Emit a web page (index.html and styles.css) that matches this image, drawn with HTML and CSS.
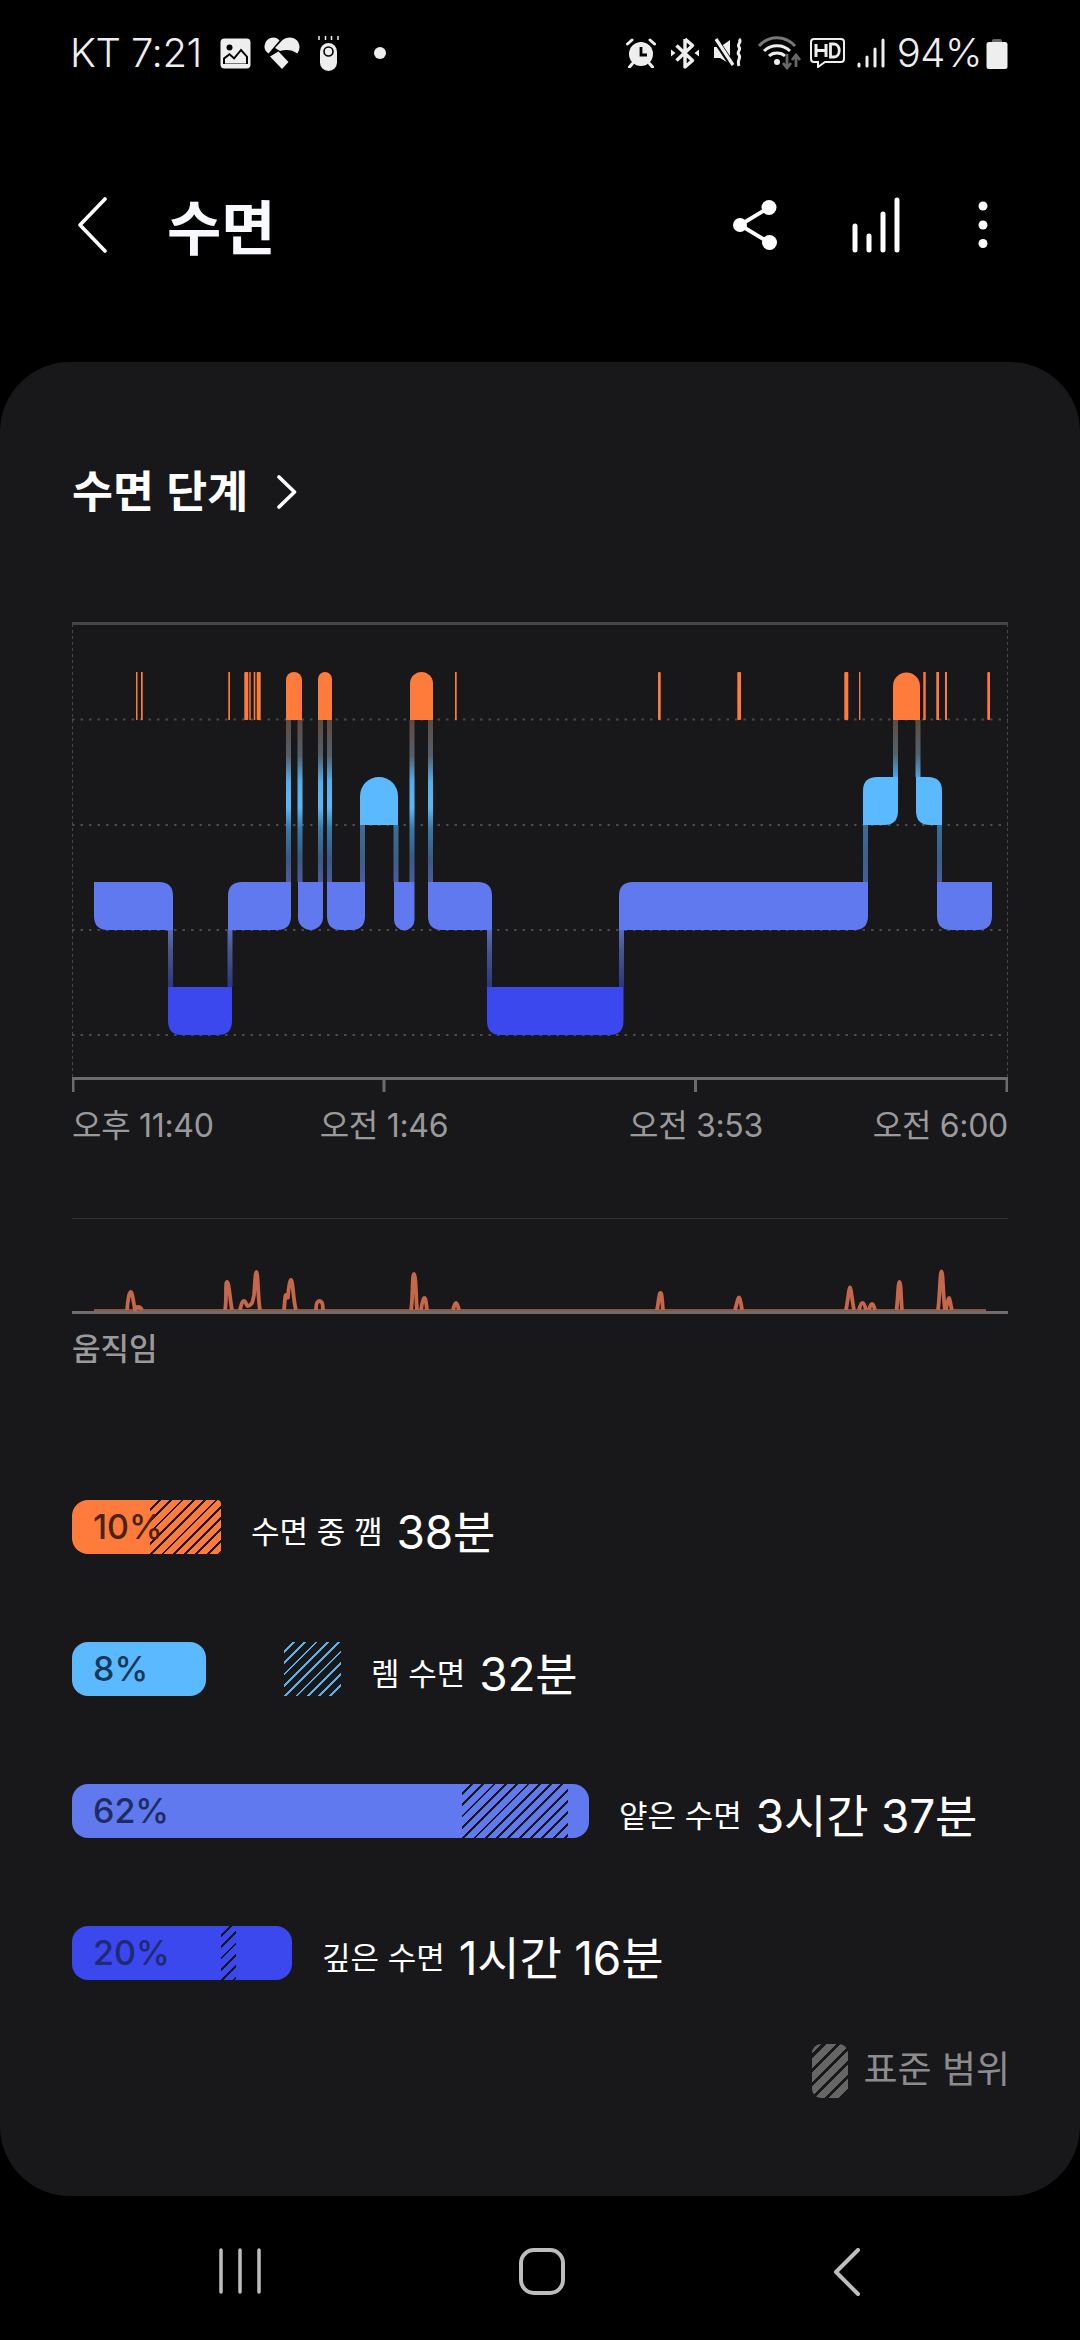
FILE: index.html
```html
<!DOCTYPE html>
<html lang="ko">
<head>
<meta charset="utf-8">
<title>수면</title>
<link rel="stylesheet" href="styles.css">
</head>
<body>
<div class="page">
  <header class="status">
    <div class="status-left">
      <span class="status-text">KT 7:21</span>
      <svg class="ic-image" width="31" height="31" viewBox="0 0 31 31"><rect x="0.5" y="0.5" width="30" height="30" rx="4" fill="#eee"/><circle cx="9.5" cy="9.5" r="3" fill="#000"/><path d="M3 26V20L9.500 15l4.500 4L21 10.500 28 18.500V26Z" fill="#000"/><path d="M5 25.500V21L9.500 17.500l4.700 4.200L21 13.500 26 19V25.500Z" fill="#eee"/></svg>
      <svg class="ic-heart" width="36" height="32" viewBox="0 0 36 32"><path d="M.5 10C.5 4.500 4.500.5 9.500.5 12 .5 14 1.500 15.500 3.500L4.500 16.500C1.800 14.500.5 12.500.5 10Z" fill="#eee"/><path d="M18 3.500C20 1.500 23 .5 26 .5c5.500 0 9.500 4.300 9.500 9.500 0 2.500-.8 4.500-2.300 6.500-5-3.800-11-4.200-17.200-2.500L11 11Z" fill="#eee"/><path d="M6 19.500 14.500 14.500 24.500 25 18 32Z" fill="#eee"/></svg>
      <svg class="ic-band" width="21" height="36" viewBox="0 0 21 36"><g stroke="#eee" stroke-width="1.500"><path d="M1 1v4M7.500 1v4M13.500 1v4M20 1v4"/></g><rect x="2" y="8" width="17" height="28" rx="8.500" fill="#eee"/><circle cx="10.500" cy="16.500" r="4.500" fill="#eee" stroke="#000" stroke-width="1.600"/></svg>
      <span class="status-dot"></span>
    </div>
    <div class="status-right">
      <svg width="30" height="30" viewBox="0 0 30 30"><circle cx="15" cy="16" r="12" fill="#eee"/><path d="M15 9V17H21" fill="none" stroke="#000" stroke-width="2.800"/><path d="M1.500 6 6 2M28.500 6 24 2M6.500 25.500 3.500 29M23.500 25.500l3 3.500" stroke="#eee" stroke-width="3" stroke-linecap="round"/></svg>
      <svg class="m-bt" width="28" height="32" viewBox="0 0 28 32"><path d="M14 2V30L21.500 23.500 5.500 8.500M14 2l7.500 6.500L5.500 23.500" fill="none" stroke="#eee" stroke-width="3.400" stroke-linejoin="round"/><path d="M0 12.500v7l4.500-3.500ZM28 12.500v7l-4.500-3.500Z" fill="#eee"/></svg>
      <svg class="m-mute" width="30" height="30" viewBox="0 0 30 30"><path d="M0 9h6L16 2V26L6 20H0Z" fill="#eee"/><path d="M1 1 19 28" stroke="#000" stroke-width="6"/><path d="M2 1 19 27" stroke="#eee" stroke-width="3.200"/><path d="M25 1c3.500 3-2.500 5 0 8 2.500 3-3 5 0 8 2.500 3-2.500 5 0 11" fill="none" stroke="#eee" stroke-width="3"/></svg>
      <svg class="m-wifi" width="44" height="34" viewBox="0 0 44 34"><path d="M1 10C11-1 27-1 37 10" fill="none" stroke="#777" stroke-width="3"/><path d="M6 15c7-7 19-7 26 0" fill="none" stroke="#eee" stroke-width="3"/><path d="M11 20c4-4 12-4 16 0" fill="none" stroke="#eee" stroke-width="3"/><circle cx="19" cy="26" r="3" fill="#eee"/><path d="M29 18V31M25 27l4 5 4-5" fill="none" stroke="#666" stroke-width="2.800"/><path d="M38 31V20M34 24l4-5 4 5" fill="none" stroke="#666" stroke-width="2.800"/></svg>
      <svg class="m-hd" width="35" height="30" viewBox="0 0 35 30"><path d="M4 1H31a3 3 0 0 1 3 3V21a3 3 0 0 1-3 3H15L8 29V24H4a3 3 0 0 1-3-3V4a3 3 0 0 1 3-3Z" fill="none" stroke="#eee" stroke-width="2"/><path d="M6 6V19M16 6V19M6 12.500H16" fill="none" stroke="#eee" stroke-width="3"/><path d="M20.500 6V19h3.500c7 0 7-13 0-13Z" fill="none" stroke="#eee" stroke-width="2.800"/></svg>
      <svg class="m-signal" width="28" height="30" viewBox="0 0 28 30"><g stroke="#eee" stroke-width="3" stroke-linecap="round"><path d="M2 26V28M10 19V28M18 11V28M26 2V28"/></g></svg>
      <span class="status-text status-pct">94%</span>
      <svg class="m-batt" width="22" height="31" viewBox="0 0 22 31"><path d="M6 3a2 2 0 0 1 2-2H14a2 2 0 0 1 2 2V4H6Z" fill="#666"/><rect x="0.500" y="4" width="21" height="27" rx="2.500" fill="#eee"/></svg>
    </div>
  </header>

  <nav class="appbar">
    <svg class="app-back" width="30" height="56" viewBox="0 0 30 56"><path d="M28 2 3 28 28 54" fill="none" stroke="#fff" stroke-width="3.600" stroke-linecap="round" stroke-linejoin="round"/></svg>
    <h1 class="app-title">수면</h1>
    <div class="app-actions">
      <svg class="app-share" width="44" height="50" viewBox="0 0 44 50"><path d="M36 7.500 7 25l29 17.500" fill="none" stroke="#fff" stroke-width="4"/><circle cx="36" cy="7.500" r="7.500" fill="#fff"/><circle cx="7" cy="25" r="7" fill="#fff"/><circle cx="36.500" cy="42.500" r="7.500" fill="#fff"/></svg>
      <svg class="app-bars" width="48" height="56" viewBox="0 0 48 56"><g stroke="#fff" stroke-width="5" stroke-linecap="round"><path d="M3 29V53M17 39V53M31 17V53M45 3V53"/></g></svg>
      <svg class="app-more" width="10" height="48" viewBox="0 0 10 48"><circle cx="5" cy="5" r="4.500" fill="#fff"/><circle cx="5" cy="24" r="4.500" fill="#fff"/><circle cx="5" cy="42.500" r="4.500" fill="#fff"/></svg>
    </div>
  </nav>

  <main class="card">
    <div class="card-title">
      <h2 class="card-heading">수면 단계</h2>
      <svg width="20" height="34" viewBox="0 0 20 34"><path d="M2 2 17.500 17 2 32" fill="none" stroke="#fff" stroke-width="3.600" stroke-linecap="round" stroke-linejoin="round"/></svg>
    </div>

    <svg class="stage-chart" width="936" height="476" viewBox="72 622 936 476">
      <defs>
        <linearGradient id="wakeLight" x1="0" y1="0" x2="0" y2="1">
          <stop offset="0" stop-color="#604a42"/><stop offset=".22" stop-color="#525f6c"/><stop offset=".38" stop-color="#55aeea"/><stop offset=".54" stop-color="#5bb8f8"/><stop offset=".67" stop-color="#387aa8"/><stop offset=".85" stop-color="#3a5a88"/><stop offset="1" stop-color="#4a5c9c"/>
        </linearGradient>
        <linearGradient id="remLight" x1="0" y1="0" x2="0" y2="1">
          <stop offset="0" stop-color="#3a6e96"/><stop offset=".6" stop-color="#3b5f8c"/><stop offset="1" stop-color="#4a5ca0"/>
        </linearGradient>
        <linearGradient id="lightDeep" x1="0" y1="0" x2="0" y2="1">
          <stop offset="0" stop-color="#5a6cbc"/><stop offset=".4" stop-color="#46548c"/><stop offset="1" stop-color="#2c3880"/>
        </linearGradient>
        <linearGradient id="wakeRem" x1="0" y1="0" x2="0" y2="1">
          <stop offset="0" stop-color="#604a42"/><stop offset=".6" stop-color="#52626e"/><stop offset="1" stop-color="#4aa4e4"/>
        </linearGradient>
      </defs>
      <g class="grid-dots">
        <path d="M72 719.500H1008M72 825H1008M72 930H1008M72 1035H1008"/>
      </g>
      <path class="grid-side" d="M72.500 624V1078M1007.500 624V1078"/>
      <path class="grid-top" d="M72 623.500H1008"/>
      <path class="axis" d="M72 1078.500H1008M73 1078V1092M384 1078V1092M695.500 1078V1092M1007 1078V1092"/>

      <g fill="url(#wakeLight)">
        <rect x="286" y="720" width="5" height="162"/><rect x="297.500" y="720" width="5" height="162"/>
        <rect x="318" y="720" width="5" height="162"/><rect x="327" y="720" width="5" height="162"/>
        <rect x="409.500" y="720" width="5" height="162"/><rect x="428" y="720" width="5" height="162"/>
      </g>
      <g fill="url(#wakeRem)">
        <rect x="893" y="720" width="5" height="57"/><rect x="915.500" y="720" width="5" height="57"/>
      </g>
      <g fill="url(#remLight)">
        <rect x="360" y="825" width="5" height="57"/><rect x="393.500" y="825" width="5" height="57"/>
        <rect x="863" y="825" width="5" height="57"/><rect x="937" y="825" width="5" height="57"/>
      </g>
      <g fill="url(#lightDeep)">
        <rect x="168" y="930" width="5" height="57"/><rect x="227.500" y="930" width="5" height="57"/>
        <rect x="487" y="930" width="5" height="57"/><rect x="619" y="930" width="5" height="57"/>
      </g>

      <g class="s-wake">
        <path d="M286 720V680A8 8 0 0 1 302 680V720Z"/>
        <path d="M318 720V679A7 7 0 0 1 332 679V720Z"/>
        <path d="M410 720V683.500A11.500 11.500 0 0 1 433 683.500V720Z"/>
        <path d="M893 720V686A13.500 13.500 0 0 1 920 686V720Z"/>
        <rect x="136" y="672" width="1.500" height="48"/><rect x="141" y="672" width="1.700" height="48"/>
        <rect x="228.300" y="672" width="1.700" height="48"/><rect x="244.300" y="672" width="4" height="48" rx="1"/>
        <rect x="249.300" y="672" width="1.400" height="48"/><rect x="253.700" y="672" width="1.600" height="48"/>
        <rect x="256.700" y="672" width="4" height="48" rx="1"/><rect x="455" y="672" width="1.700" height="48"/>
        <rect x="658" y="672" width="2.700" height="48" rx="1"/><rect x="737.300" y="672" width="3.700" height="48" rx="1"/>
        <rect x="844.300" y="672" width="4" height="48" rx="1"/><rect x="859" y="672" width="1.400" height="48"/>
        <rect x="923.300" y="672" width="2.400" height="48"/><rect x="936.300" y="672" width="2.700" height="48"/>
        <rect x="945" y="672" width="2" height="48"/><rect x="987.300" y="672" width="2.700" height="48" rx="1"/>
      </g>
      <g class="s-rem">
        <path d="M360 825V796A19 19 0 0 1 398 796V825Z"/>
        <path d="M877 777H898V811Q898 825 884 825H863V791Q863 777 877 777Z"/>
        <path d="M916 777H928Q942 777 942 791V825H930Q916 825 916 811Z"/>
      </g>
      <g class="s-light">
        <path d="M94 882H159Q173 882 173 896V930H108Q94 930 94 916Z"/>
        <path d="M242 882H291V916Q291 930 277 930H228V896Q228 882 242 882Z"/>
        <path d="M298 882H323V917.500A12.500 12.500 0 0 1 298 917.500Z"/>
        <path d="M327 882H365V916Q365 930 351 930H341Q327 930 327 916Z"/>
        <path d="M394 882H414.500V920A10.250 10.250 0 0 1 394 920Z"/>
        <path d="M428 882H478Q492 882 492 896V930H442Q428 930 428 916Z"/>
        <path d="M633 882H868V916Q868 930 854 930H619V896Q619 882 633 882Z"/>
        <path d="M937 882H992V916Q992 930 978 930H951Q937 930 937 916Z"/>
      </g>
      <g class="s-deep">
        <path d="M168 987H232V1021Q232 1035 218 1035H182Q168 1035 168 1021Z"/>
        <path d="M487 987H623.500V1021Q623.500 1035 609.500 1035H501Q487 1035 487 1021Z"/>
      </g>
    </svg>

    <div class="time-labels">
      <span class="t-first">오후 11:40</span>
      <span class="t-mid">오전 1:46</span>
      <span class="t-mid">오전 3:53</span>
      <span class="t-last">오전 6:00</span>
    </div>

    <svg class="move-chart" width="936" height="97" viewBox="72 1218 936 97">
      <path class="move-top" d="M72 1218.500H1008"/>
      <path class="move-base" d="M72 1312.500H1008"/>
      <path class="move-line" d="M94 1310H986"/>
      <path class="move-spikes" d="M127 1310C128 1300 129 1292 130.700 1292C132.500 1292 133 1300 135 1310C136 1306 140 1306 142 1310M225 1310C227 1300 225 1282 227 1282C229 1282 230 1300 232 1310M240 1310C241 1306 242 1301 244 1301C246 1301 246 1306 248 1306C251 1304 252 1306 254 1295C255 1285 255 1272 256.500 1272C258 1272 258 1300 260 1310M284 1310C285 1300 285 1295 286 1295C288 1296 288 1300 288 1296C289 1285 290 1280 291 1280C293 1280 293 1300 296 1310M316 1310C316 1305 317 1301 319.500 1301C322 1301 323 1305 323 1310M411 1310C413 1300 412 1274 414 1274C416 1274 416 1300 417 1310M421 1310C422 1303 423 1298 424 1298C426 1298 426 1303 427 1310M453 1310C454 1306 455 1303 456 1303C457 1303 458 1306 459 1310M657 1310C659 1300 659 1293 660.500 1293C662 1293 662 1300 663 1310M735 1310C737 1303 738 1297.500 739 1297.500C740 1297.500 741 1303 742 1310M846 1310C848 1300 849 1287.500 850 1287.500C851 1287.500 852 1300 854 1310M859 1310C860 1306 861 1303 862.500 1303C864 1303 865 1306 866 1310M869 1310C870 1306 871 1304 872 1304C873 1304 874 1306 875 1310M896.500 1310C898 1300 898 1282 899.500 1282C901 1282 901 1300 902 1310M938 1310C940 1295 940 1271.500 941.500 1271.500C943 1271.500 943 1295 945 1310M946 1310C947 1303 948 1298 949 1298C950 1298 950 1303 952 1310"/>
    </svg>
    <p class="move-label">움직임</p>

    <ul class="rows">
      <li class="row">
        <div class="track" style="width:149px">
          <div class="fill c-wake fill-full" style="width:149px"><span class="pct p-wake">10%</span></div>
          <div class="hatch h-dark h-end" style="left:78px;width:71px"></div>
        </div>
        <span class="row-label">수면 중 깸</span><span class="row-value">38분</span>
      </li>
      <li class="row">
        <div class="track" style="width:269px">
          <div class="fill c-rem" style="width:134px"><span class="pct p-rem">8%</span></div>
          <div class="hatch h-rem" style="left:212px;width:57px"></div>
        </div>
        <span class="row-label">렘 수면</span><span class="row-value">32분</span>
      </li>
      <li class="row">
        <div class="track" style="width:517px">
          <div class="fill c-light" style="width:517px"><span class="pct p-light">62%</span></div>
          <div class="hatch h-dark" style="left:390px;width:106px"></div>
        </div>
        <span class="row-label">얕은 수면</span><span class="row-value">3시간 37분</span>
      </li>
      <li class="row">
        <div class="track" style="width:220px">
          <div class="fill c-deep" style="width:220px"><span class="pct p-deep">20%</span></div>
          <div class="hatch h-dark" style="left:149px;width:15px"></div>
        </div>
        <span class="row-label">깊은 수면</span><span class="row-value">1시간 16분</span>
      </li>
    </ul>

    <div class="legend">
      <span class="legend-swatch"></span>
      <span class="legend-text">표준 범위</span>
    </div>
  </main>

  <footer class="navbar">
    <svg width="42" height="46" viewBox="0 0 42 46"><g stroke="#bdbdbd" stroke-width="3.500" stroke-linecap="round"><path d="M2 2V44M21 2V44M40 2V44"/></g></svg>
    <svg class="nav-home" width="46" height="47" viewBox="0 0 46 47"><rect x="2" y="2" width="42" height="43" rx="13" fill="none" stroke="#bdbdbd" stroke-width="4"/></svg>
    <svg class="nav-back" width="28" height="48" viewBox="0 0 28 48"><path d="M25 2 3 24 25 46" fill="none" stroke="#bdbdbd" stroke-width="4" stroke-linecap="round" stroke-linejoin="round"/></svg>
  </footer>
</div>
</body>
</html>
```
FILE: styles.css
```css
* { box-sizing: border-box; }
html, body { margin: 0; padding: 0; background: #000; }
body { font-family: Inter, "Noto Sans CJK KR", sans-serif; color: #fff; }
.page { width: 1080px; height: 2340px; display: flex; flex-direction: column; overflow: hidden; }

.status { height: 106px; display: flex; align-items: center; justify-content: space-between; padding: 0 72px 0 70px; }
.status-left, .status-right { display: flex; align-items: center; }
.status-text { font-size: 40px; font-weight: 300; color: #eee; line-height: 44px; letter-spacing: -0.5px; }
.ic-image { margin-left: 18px; }
.ic-heart { margin-left: 13px; }
.ic-band { margin-left: 18px; }
.status-dot { width: 12px; height: 12px; border-radius: 50%; background: #eee; margin-left: 35px; }
.m-bt { margin-left: 15px; }
.m-mute { margin-left: 15px; }
.m-wifi { margin-left: 14px; }
.m-hd { margin-left: 8px; }
.m-signal { margin-left: 12px; }
.status-pct { margin-left: 12px; }
.m-batt { margin-left: 4px; }

.appbar { height: 238px; margin-bottom: 18px; display: flex; align-items: center; padding: 0 92px 0 77px; }
.app-title { margin: 0 0 0 60px; font-size: 59px; line-height: 60px; font-weight: 700; font-family: "Noto Sans CJK KR", sans-serif; color: #f8f8ff; }
.app-actions { margin-left: auto; display: flex; align-items: center; }
.app-bars { margin-left: 75px; }
.app-more { margin-left: 78px; }

.card { height: 1834px; background: #18181a; border-radius: 70px; padding: 100px 72px 0; display: flex; flex-direction: column; }
.card-title { display: flex; align-items: center; height: 60px; gap: 29px; }
.card-heading { margin: 0 0 7px; font-size: 44.500px; line-height: 60px; font-weight: 700; font-family: "Noto Sans CJK KR", sans-serif; }

.stage-chart { display: block; margin-top: 100px; flex: none; }
.grid-dots path { fill: none; stroke: #4a4a4c; stroke-width: 2; stroke-dasharray: 2.500 6; }
.grid-side { fill: none; stroke: #47474a; stroke-width: 1; stroke-dasharray: 3 3; }
.grid-top { fill: none; stroke: #454547; stroke-width: 3; }
.axis { fill: none; stroke: #6b6b6d; stroke-width: 3; }
.s-wake { fill: #ff7b3b; }
.s-rem { fill: #5bbaff; }
.s-light { fill: #6079ef; }
.s-deep { fill: #3a48ee; }

.time-labels { display: grid; grid-template-columns: repeat(6, 1fr); margin-top: 8px; height: 40px; font-size: 32px; line-height: 40px; color: #9a9a9c; white-space: nowrap; letter-spacing: -0.3px; }
.t-first { grid-column: 1; }
.t-mid { grid-column: span 2; text-align: center; }
.t-last { grid-column: 6; justify-self: end; }

.move-chart { display: block; margin-top: 72px; flex: none; }
.move-top { fill: none; stroke: #333335; stroke-width: 1; }
.move-base { fill: none; stroke: #716b69; stroke-width: 3; }
.move-line { fill: none; stroke: #8c5642; stroke-width: 2; }
.move-spikes { fill: none; stroke: #c4674a; stroke-width: 3.800; stroke-linejoin: round; }
.move-label { margin: 14px 0 0; font-size: 31px; line-height: 40px; font-weight: 500; color: #9a9a9c; }

.rows { list-style: none; margin: 131px 0 0; padding: 0; display: flex; flex-direction: column; gap: 88px; }
.row { height: 54px; display: flex; align-items: center; }
.track { position: relative; height: 54px; flex: none; margin-right: 30px; }
.fill { height: 54px; border-radius: 16px; display: flex; align-items: center; padding-left: 21px; }
.fill-full { border-radius: 16px 4px 4px 16px; }
.c-wake { background: #ff7b3b; }
.c-rem { background: #5bbaff; }
.c-light { background: #6079ef; }
.c-deep { background: #3a48ee; }
.pct { font-size: 34px; line-height: 40px; font-weight: 500; position: relative; z-index: 1; }
.p-wake { color: #4a2413; }
.p-rem { color: #16395a; }
.p-light { color: #1f2c62; }
.p-deep { color: #1f2a74; }
.hatch { position: absolute; top: 0; height: 54px; }
.h-dark { background: repeating-linear-gradient(135deg, transparent 0 6px, #18181a 6px 8px); }
.h-end { border-radius: 0 4px 4px 0; }
.h-rem { background: repeating-linear-gradient(135deg, #18181a 0 6px, #5bb0e8 6px 8px); }
.row-label { font-size: 31px; line-height: 40px; color: #fff; margin-right: 14px; padding-top: 9px; white-space: nowrap; }
.row-value { font-size: 46px; line-height: 54px; font-weight: 400; color: #fff; white-space: nowrap; letter-spacing: -0.2px; padding-top: 9px; }

.legend { margin-top: 64px; margin-right: -2px; display: flex; align-items: center; justify-content: flex-end; gap: 15px; }
.legend-swatch { width: 36px; height: 54px; border-radius: 9px; background: repeating-linear-gradient(135deg, #666 0 7px, #18181a 7px 10px); }
.legend-text { font-size: 37px; line-height: 48px; color: #8c8c8e; white-space: nowrap; margin-bottom: 3px; }

.navbar { flex: 1; display: flex; align-items: flex-start; padding: 52px 0 0 219px; }
.nav-home { margin-left: 258px; }
.nav-back { margin-left: 268px; }
```
